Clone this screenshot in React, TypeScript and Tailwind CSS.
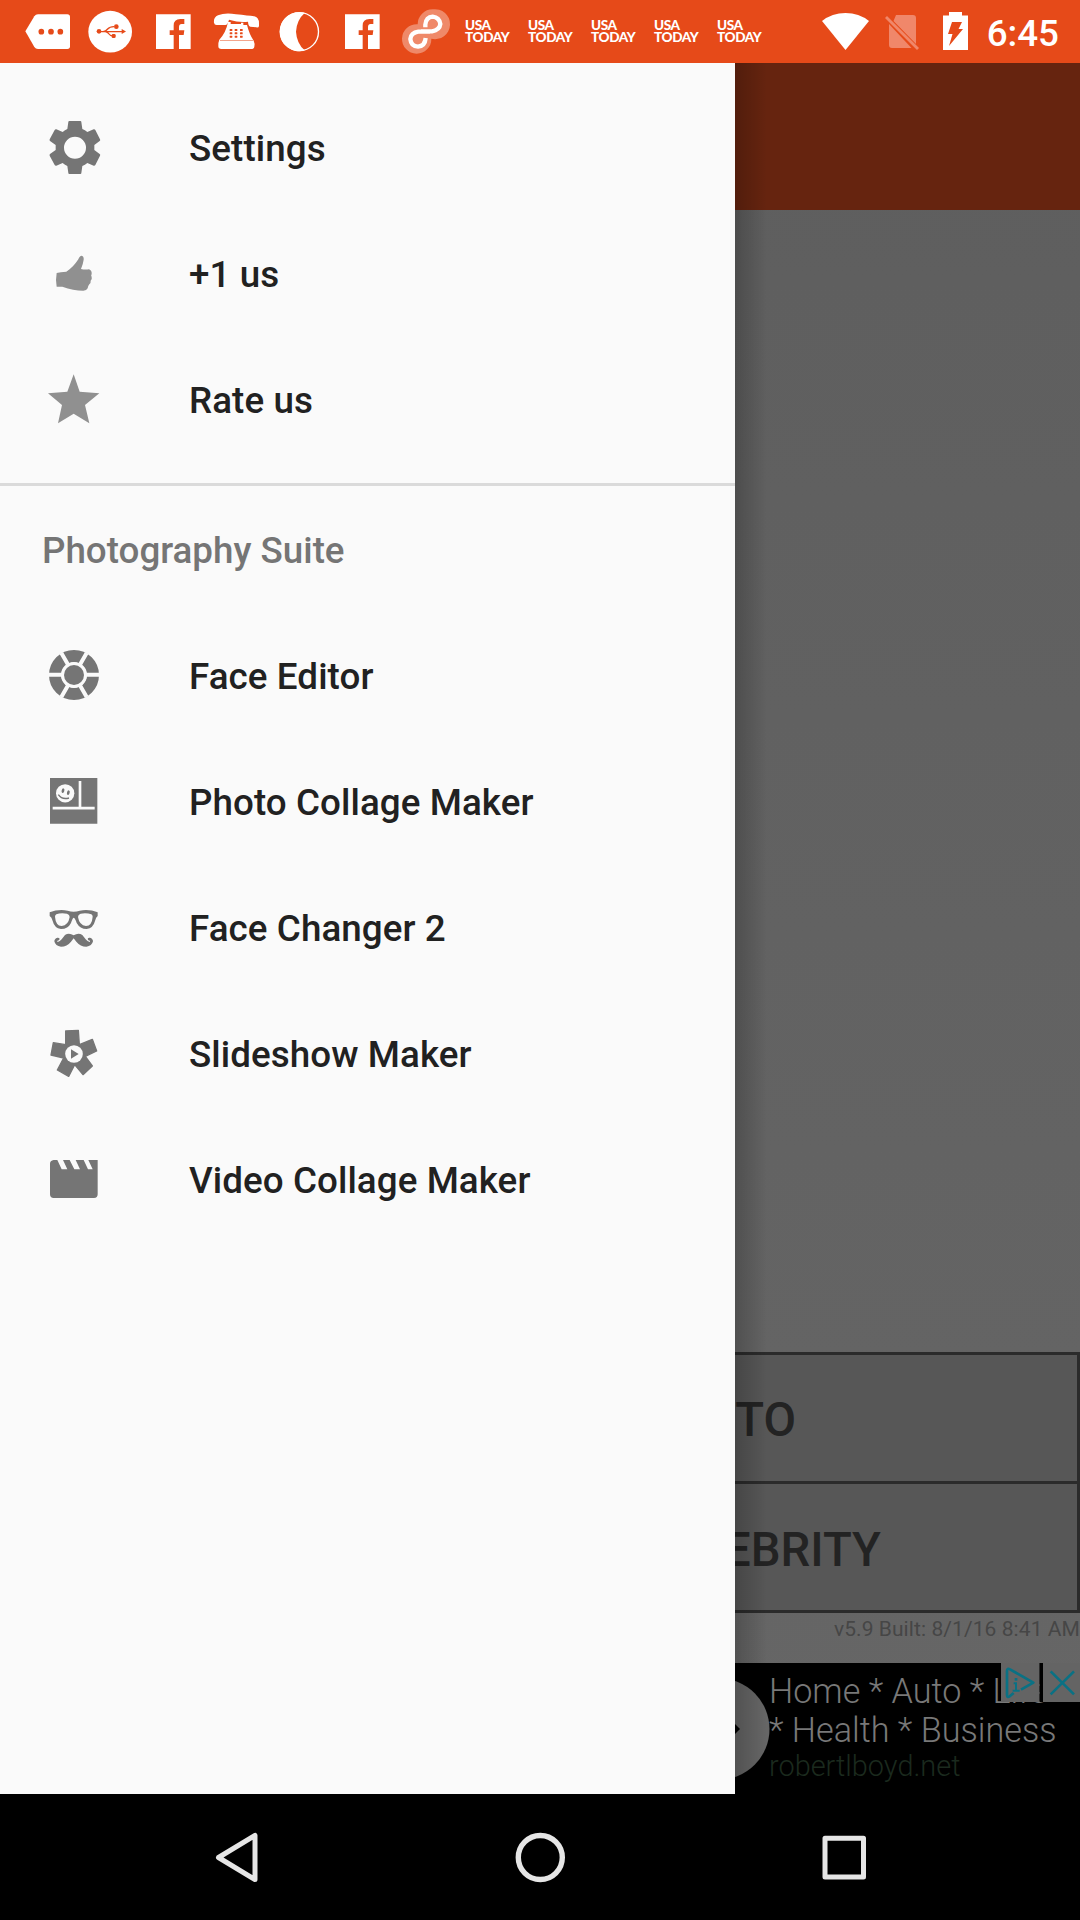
import React from "react";

const G = "#757575";

function Slot({ k, children }: { k: number; children: React.ReactNode }) {
  return (
    <svg className="h-[63px] w-[63px] shrink-0" viewBox={`${48 + 189 * k} 0 189 189`} fill="#fff">
      {children}
    </svg>
  );
}

function Facebook({ k }: { k: number }) {
  return (
    <Slot k={k}>
      <g transform={`translate(${(k - 2) * 189} 0)`}>
        <path d="M468 43H572V147H537V105H551L553 91H537V81Q537 72 545 72H553V57H541Q521 57 521 77V91H509V105H521V147H468Z" />
      </g>
    </Slot>
  );
}

function UsaToday() {
  return (
    <div className="flex h-[63px] w-[63px] shrink-0 flex-col pt-[20px] pl-[8px] font-['Lato'] text-[13.6px] leading-[11.5px] font-black tracking-[-0.4px]">
      <span>USA</span>
      <span>TODAY</span>
    </div>
  );
}

function StatusBar() {
  return (
    <header className="flex h-[63px] items-center bg-[#e64a19] pl-4 text-white">
      <Slot k={0}>
        <path d="M76 94L103 49Q107 43 114 43H202Q210 43 210 51V139Q210 147 202 147H114Q107 147 103 141Z" />
        <g fill="#e64a19"><circle cx="124" cy="95" r="8.5" /><circle cx="153" cy="95" r="8.5" /><circle cx="181" cy="95" r="8.5" /></g>
      </Slot>
      <Slot k={1}>
        <ellipse cx="330.500" cy="95" rx="65.500" ry="62.500" />
        <g fill="none" stroke="#e64a19" strokeWidth="4">
          <path d="M297 95H368M309 95Q317 95 323 87Q329 80 342 80M316 95Q323 96 327 102Q331 108 339 108" />
        </g>
        <g fill="#e64a19"><circle cx="297" cy="94" r="7" /><circle cx="349" cy="80" r="7" /><rect x="335" y="102" width="12" height="12" rx="4" /><path d="M365 87L378 94.500L365 102Z" /></g>
      </Slot>
      <Facebook k={2} />
      <Slot k={3}>
        <path d="M642 68Q640 52 654 46Q676 37 708 43Q745 47 762 49Q777 52 777 70V78Q776 84 769 82L751 80Q745 79 744 65Q720 69 687 59Q683 75 676 75L650 75Q643 75 642 68Z" />
        <path d="M684 66H692V72H723V68H730V75H741Q748 103 761 122Q765 130 763 140Q762 147 753 147H664Q655 147 655 139Q654 128 658 119Q678 98 684 66Z" />
        <g fill="#e64a19">
          {[689, 704, 720].map((x) => [87, 97, 107].map((y) => <rect key={`${x}-${y}`} x={x} y={y} width="8" height="6" rx="1" />))}
          <rect x="660" y="120" width="99" height="1.500" />
        </g>
      </Slot>
      <Slot k={4}>
        <circle cx="898.500" cy="95" r="57" fill="none" stroke="#fff" strokeWidth="4" />
        <path d="M914 39A58.500 58.500 0 1 0 914 151Q890 130 888 95Q890 60 914 39Z" />
      </Slot>
      <Facebook k={5} />
      <Slot k={6}>
        <g opacity=".35"><path d="M1298 28A45 45 0 1 1 1294 116A44 44 0 1 1 1253 73A45 45 0 0 1 1298 28Z" /></g>
        <path d="M1263 94H1296Q1319 90 1321 72Q1318 52 1298 50Q1278 51 1276 74V82M1290 95H1255Q1233 98 1231 117Q1233 139 1254 140Q1275 138 1277 114" fill="none" stroke="#fff" strokeWidth="13" />
      </Slot>
      <UsaToday /><UsaToday /><UsaToday /><UsaToday /><UsaToday />
      <div className="ml-auto flex h-[63px] items-center pr-[21px]">
        <svg className="mr-[16px] h-[63px] w-[47px]" viewBox="0 0 47 63" fill="#fff"><path d="M0 21Q10 13 23.500 13Q37 13 47 21L23.500 50Z" /></svg>
        <svg className="mr-[24px] h-[63px] w-[34px]" viewBox="0 0 34 63">
          <path d="M11 15H28Q31 15 31 18V44L8.500 21ZM4 24L26.500 48H7Q4 48 4 45Z" fill="#f0876a" />
          <path d="M1 17L33 49" stroke="#f0876a" strokeWidth="2.800" />
        </svg>
        <svg className="mr-[19px] h-[63px] w-[25px]" viewBox="0 0 25 63">
          <path d="M0 15.500H6V12H19V15.500H25V50H0Z" fill="#fff" />
          <path d="M9 22H19L15.500 29H20L6 46L9.500 34H5Z" fill="#e64a19" />
        </svg>
        <span className="pt-[3px] text-[36.75px] leading-[63px] font-medium">6:45</span>
      </div>
    </header>
  );
}

function Row({ label, box, fill = G, children }: { label: string; box: string; fill?: string; children: React.ReactNode }) {
  return (
    <li className="flex h-[126px] items-center pl-[42px]">
      <svg className="h-16 w-16 shrink-0" viewBox={box} fill={fill}>{children}</svg>
      <span className="ml-[83px] pt-[2px] text-[36.75px] leading-[44px] font-medium tracking-[0.08px] text-[#212121]">{label}</span>
    </li>
  );
}

function Drawer() {
  return (
    <aside className="h-full w-[735px] shrink-0 bg-[#fafafa] pt-[21px]">
      <ul className="[&_span]:pt-[4px]">
        <Row label="Settings" box="126 75 192 192">
          <path fillRule="evenodd" d="M208 93H241Q244 93 244 96L247 117Q255 120 262 126L281 118Q284 117 286 120L300 148Q302 151 299 153L283 165V180L299 192Q302 194 300 197L286 225Q284 228 281 227L262 219Q255 225 247 228L244 249Q244 252 241 252H208Q205 252 205 249L202 228Q195 225 188 219L169 227Q166 228 164 225L149 197Q148 194 150 192L167 180V165L150 153Q148 151 149 148L164 120Q166 117 169 118L188 126Q195 120 202 117L205 96Q205 93 208 93ZM225 140A33 33 0 1 0 225 206A33 33 0 1 0 225 140Z" />
        </Row>
        <Row label="+1 us" box="126 453 192 192" fill="#909090">
          <path d="M170 549Q181 546 199 545Q219 533 235 508Q239 497 245 497Q252 499 251 509Q249 523 243 537Q254 540 267 538Q276 541 275 552Q272 556 275 561Q277 567 272 572Q273 579 268 583Q264 587 263 595Q260 602 250 602Q220 602 187 590L170 590Q166 571 170 549Z" />
        </Row>
        <Row label="Rate us" box="126 831 192 192" fill="#909090">
          <path d="M221 853L239 905L298 910L255 945L268 1000L221 971L174 1000L186 945L144 910L202 905Z" />
        </Row>
      </ul>
      <div className="mt-[21px] h-[3px] bg-[#dadada]" />
      <h2 className="flex h-[127px] items-center pt-[3px] pl-[42px] text-[36.75px] font-medium text-[#757575]">Photography Suite</h2>
      <ul>
        <Row label="Face Editor" box="126 522 192 192">
          <circle cx="222" cy="615" r="56.500" fill="none" stroke={G} strokeWidth="37" />
          <path d="M146 614H298M184 549L260 681M260 549L184 681" stroke="#fafafa" strokeWidth="12" />
          <circle cx="222" cy="615" r="39" fill="#fafafa" />
          <circle cx="222" cy="615" r="30" />
        </Row>
        <Row label="Photo Collage Maker" box="36 60 192 192">
          <path d="M60 84H202V221H60Z" />
          <path d="M150 93V174M68 174.500H194" stroke="#fafafa" strokeWidth="8" />
          <circle cx="105.500" cy="130" r="27.500" fill="#fafafa" />
          <ellipse cx="99" cy="122" rx="4" ry="7" transform="rotate(15 99 122)" /><ellipse cx="115" cy="128" rx="4" ry="7" transform="rotate(15 115 128)" />
          <path d="M85 134Q96 150 117 144" fill="none" stroke={G} strokeWidth="4" />
        </Row>
        <Row label="Face Changer 2" box="36 438 192 192">
          <path fillRule="evenodd" d="M59 487Q85 477 113 482Q131 488 149 482Q178 477 203 487V498Q198 501 195 513Q190 534 170 537Q150 537 140 519Q136 505 131 503Q127 505 123 519Q114 537 93 537Q73 534 68 513Q65 501 59 498ZM75 500Q77 527 95 528Q115 526 119 501Q119 493 111 491Q91 488 79 493Q75 495 75 500ZM144 501Q148 526 168 528Q186 527 188 500Q188 495 184 493Q170 488 152 491Q144 493 144 501Z" />
          <path d="M131 556Q117 547 105 555L95 568Q88 576 83 576Q79 573 87 571Q92 562 82 563Q73 566 73 574Q76 588 93 590Q111 590 123 575L131 565L139 575Q151 590 169 590Q186 588 189 574Q189 566 180 563Q170 562 175 571Q183 573 179 576Q174 576 167 568L157 555Q145 547 131 556Z" />
        </Row>
        <Row label="Slideshow Maker" box="36 66 192 192">
          <g stroke={G} strokeWidth="4" strokeLinejoin="round">
            <path d="M107 93L145 91L148 134L187 118L200 153L166 169L187 198L159 224L134 194L116 229L82 210L101 174L63 165L70 128L107 134Z" />
          </g>
          <circle cx="132" cy="162" r="26.500" fill="#fafafa" />
          <path d="M123 148L146 162L123 176Z" />
        </Row>
        <Row label="Video Collage Maker" box="36 444 192 192">
          <path d="M71 480H82L95 508H112L99 480H119L133 508H150L137 480H161L174 508H188L175 480H203V583Q203 594 192 594H71Q60 594 60 583V491Q60 482 71 480Z" />
        </Row>
      </ul>
    </aside>
  );
}

function AdBanner() {
  return (
    <div className="relative h-[131px] overflow-hidden bg-black">
      <svg className="absolute top-0 left-0 h-[131px] w-9" viewBox="0 0 36 131">
        <circle cx="-16" cy="66" r="50.500" fill="#666" /><path d="M0 61L5 66L0 71Z" />
      </svg>
      <div className="flex flex-col pt-[9px] pl-[34px] font-light whitespace-nowrap text-[#787878]">
        <span className="text-[34.2px] leading-[39px]">Home * Auto * Life</span>
        <span className="text-[34.2px] leading-[39px]">* Health * Business</span>
        <span className="text-[28.9px] leading-[33px] text-[#1b2a1e]">robertlboyd.net</span>
      </div>
      <svg className="absolute top-0 right-0 h-[39px] w-[79px]" viewBox="902 68 237 117" fill="none" stroke="#0a7184" strokeWidth="8">
        <path d="M902 68H1018V185H902ZM1028 68H1139V185H1028Z" fill="#646464" stroke="none" />
        <path d="M1018 68H1028V185H1018Z" fill="#000" stroke="none" />
        <path d="M940 158L928 168Q920 173 920 163V92Q920 82 929 87L999 127L962 148" strokeLinejoin="round" />
        <path d="M940 129H947V150M937 151H958" strokeWidth="6" /><path d="M943 117H951" />
        <path d="M1051 93L1121 162M1121 93L1051 162" />
      </svg>
    </div>
  );
}

function Backdrop() {
  return (
    <main className="relative flex h-full w-[345px] flex-col overflow-hidden bg-linear-to-b from-[#5e5e5e] to-[#666666]">
      <div className="h-[147px] shrink-0 bg-[#66240f]" />
      <div className="grow" />
      <div className="flex h-[261px] shrink-0 flex-col border-y-[3px] border-r-[3px] border-[#2b2b2b] bg-[#575757] text-[47.25px] leading-[56px] font-medium text-[#232323]">
        <div className="flex h-[129px] items-center justify-end border-b-[3px] border-[#2b2b2b] pt-[3px] pr-[281px]">TO</div>
        <div className="flex h-[126px] items-center justify-end pt-[5px] pr-[196px]">EBRITY</div>
      </div>
      <div className="h-[50px] shrink-0 pt-[4px] text-right text-[21px] leading-[25px] tracking-[0.08px] whitespace-nowrap text-[#464646]">v5.9 Built: 8/1/16 8:41 AM</div>
      <AdBanner />
      <div className="absolute inset-y-0 left-0 w-8 bg-linear-to-r from-black/20 to-transparent" />
    </main>
  );
}

function NavBar() {
  return (
    <footer className="flex h-[126px] items-center justify-center gap-[240px] bg-black">
      <svg className="h-16 w-16" viewBox="0 0 64 64" fill="none" stroke="#e6e6e6" strokeWidth="5" strokeLinejoin="round"><path d="M51 10.500V54.500L14.500 32.500Z" /></svg>
      <svg className="h-16 w-16" viewBox="0 0 64 64" fill="none" stroke="#e6e6e6" strokeWidth="5.400"><circle cx="32.300" cy="32.500" r="22" /></svg>
      <svg className="h-16 w-16" viewBox="0 0 64 64" fill="none" stroke="#e6e6e6" strokeWidth="5" strokeLinejoin="round"><path d="M13 13.300H51.500V52H13Z" /></svg>
    </footer>
  );
}

export default function App() {
  return (
    <div className="h-[1920px] w-[1080px] overflow-hidden bg-black font-['Roboto',sans-serif]">
      <StatusBar />
      <div className="flex h-[1731px]">
        <Drawer />
        <Backdrop />
      </div>
      <NavBar />
    </div>
  );
}
